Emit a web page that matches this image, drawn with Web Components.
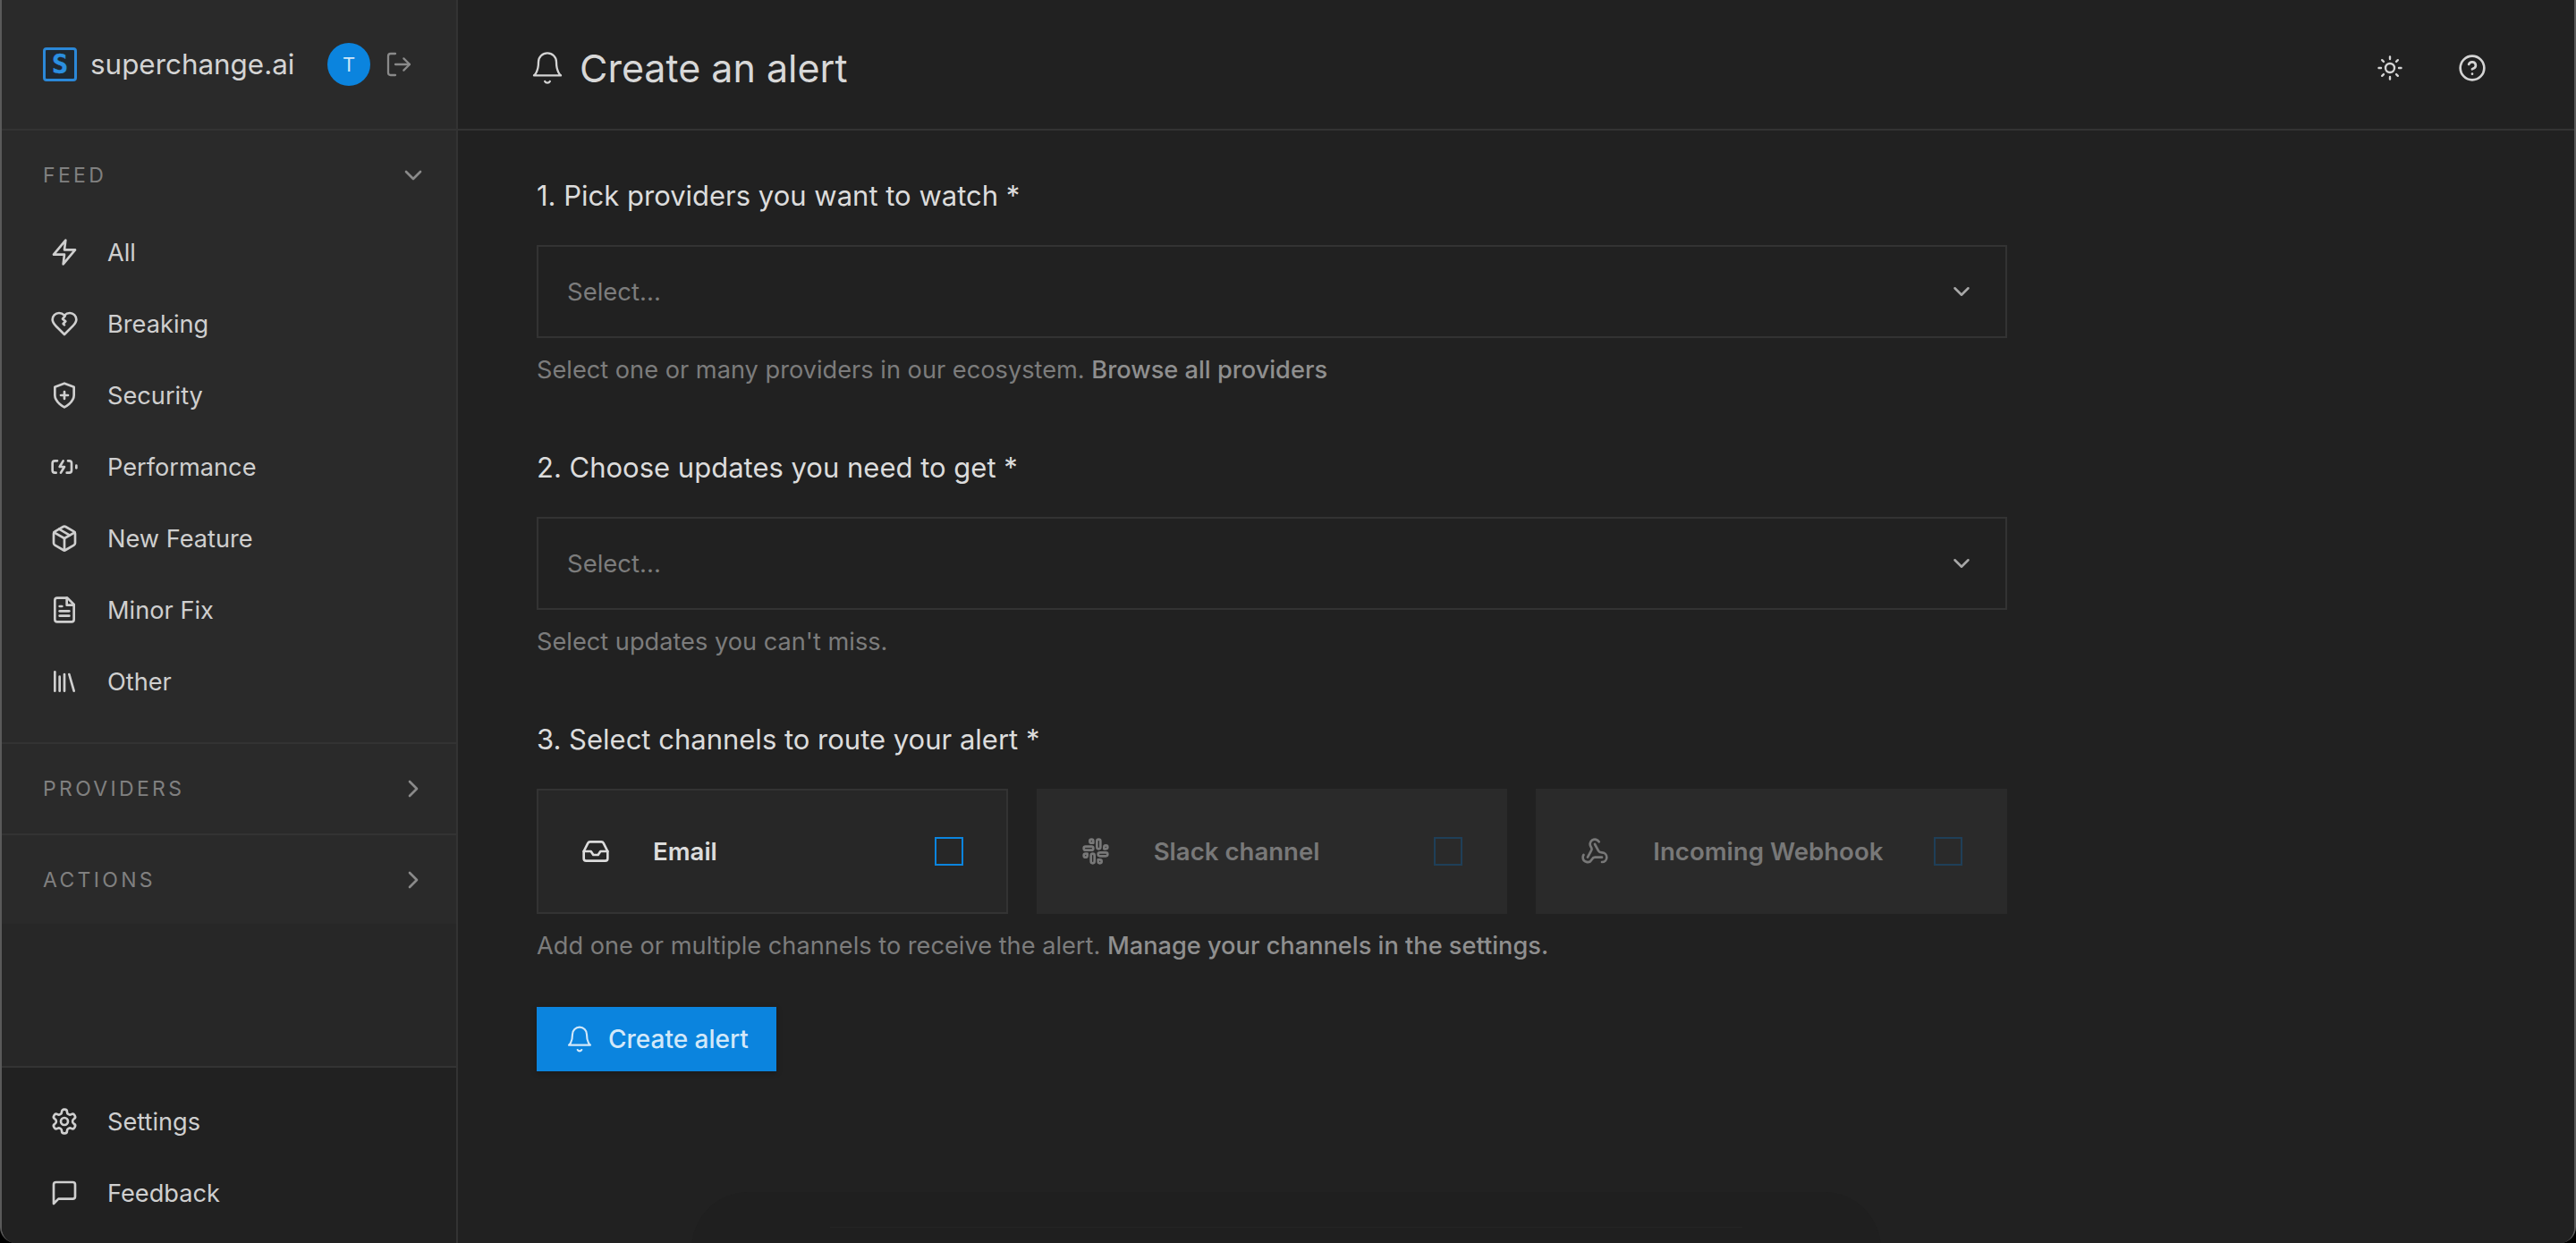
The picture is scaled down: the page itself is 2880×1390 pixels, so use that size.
<!DOCTYPE html>
<html lang="en"><head><meta charset="utf-8"><title>Create an alert</title>
<style>
html,body{margin:0;height:100%;background:#000}
body{font-family:Inter,"Liberation Sans",sans-serif;color:#d4d4d4}
b{font-weight:500;color:#8f8f8f}
</style></head><body>
<sc-app>
  <sc-sidebar slot="side">
    <sc-brand></sc-brand>
    <sc-group>
      <sc-head label="FEED" open></sc-head>
      <sc-item icon="zap">All</sc-item>
      <sc-item icon="heart">Breaking</sc-item>
      <sc-item icon="shield">Security</sc-item>
      <sc-item icon="battery">Performance</sc-item>
      <sc-item icon="package">New Feature</sc-item>
      <sc-item icon="file">Minor Fix</sc-item>
      <sc-item icon="library">Other</sc-item>
    </sc-group>
    <sc-head label="PROVIDERS" h="100"></sc-head>
    <sc-head label="ACTIONS" h="99"></sc-head>
    <sc-foot>
      <sc-item icon="settings">Settings</sc-item>
      <sc-item icon="message">Feedback</sc-item>
    </sc-foot>
  </sc-sidebar>
  <sc-main>
    <sc-topbar>Create an alert</sc-topbar>
    <sc-form>
      <sc-field label="1. Pick providers you want to watch *">
        <sc-select>Select...</sc-select>
        <span slot="hint">Select one or many providers in our ecosystem. <b>Browse all providers</b></span>
      </sc-field>
      <sc-field label="2. Choose updates you need to get *">
        <sc-select>Select...</sc-select>
        <span slot="hint">Select updates you can't miss.</span>
      </sc-field>
      <sc-field label="3. Select channels to route your alert *">
        <sc-channels>
          <sc-channel icon="inbox">Email</sc-channel>
          <sc-channel icon="slack" disabled>Slack channel</sc-channel>
          <sc-channel icon="webhook" disabled>Incoming Webhook</sc-channel>
        </sc-channels>
        <span slot="hint">Add one or multiple channels to receive the alert. <b>Manage your channels in the settings.</b></span>
      </sc-field>
      <sc-button>Create alert</sc-button>
    </sc-form>
    <sc-peek></sc-peek>
  </sc-main>
</sc-app>
<script>
const P={
zap:'<polygon points="13 2 3 14 12 14 11 22 21 10 12 10 13 2"/>',
heart:'<path d="M19 14c1.49-1.46 3-3.21 3-5.5A5.5 5.5 0 0 0 16.5 3c-1.76 0-3 .5-4.5 2-1.5-1.5-2.74-2-4.5-2A5.5 5.5 0 0 0 2 8.5c0 2.3 1.5 4.05 3 5.5l7 7Z"/><path d="m12 13-1-1 2-2-2.5-2 2-2.5"/>',
shield:'<path d="M12 22s8-4 8-10V5l-8-3-8 3v7c0 6 8 10 8 10"/><path d="M9 12h6"/><path d="M12 9v6"/>',
battery:'<path d="M15 7h1a2 2 0 0 1 2 2v6a2 2 0 0 1-2 2h-2"/><path d="M6 7H4a2 2 0 0 0-2 2v6a2 2 0 0 0 2 2h1"/><path d="m11 7-3 5h4l-3 5"/><path d="M22 11v2"/>',
package:'<path d="M16.5 9.4 7.55 4.24"/><path d="M21 16V8a2 2 0 0 0-1-1.73l-7-4a2 2 0 0 0-2 0l-7 4A2 2 0 0 0 3 8v8a2 2 0 0 0 1 1.73l7 4a2 2 0 0 0 2 0l7-4A2 2 0 0 0 21 16z"/><path d="M3.29 7 12 12l8.71-5"/><path d="M12 22V12"/>',
file:'<path d="M14.5 2H6a2 2 0 0 0-2 2v16a2 2 0 0 0 2 2h12a2 2 0 0 0 2-2V7.5L14.5 2z"/><path d="M14 2v6h6"/><path d="M16 13H8"/><path d="M16 17H8"/><path d="M10 9H8"/>',
library:'<path d="m16 6 4 14"/><path d="M12 6v14"/><path d="M8 8v12"/><path d="M4 4v16"/>',
settings:'<path d="M12.22 2h-.44a2 2 0 0 0-2 2v.18a2 2 0 0 1-1 1.73l-.43.25a2 2 0 0 1-2 0l-.15-.08a2 2 0 0 0-2.73.73l-.22.38a2 2 0 0 0 .73 2.73l.15.1a2 2 0 0 1 1 1.72v.51a2 2 0 0 1-1 1.74l-.15.09a2 2 0 0 0-.73 2.73l.22.38a2 2 0 0 0 2.73.73l.15-.08a2 2 0 0 1 2 0l.43.25a2 2 0 0 1 1 1.73V20a2 2 0 0 0 2 2h.44a2 2 0 0 0 2-2v-.18a2 2 0 0 1 1-1.73l.43-.25a2 2 0 0 1 2 0l.15.08a2 2 0 0 0 2.73-.73l.22-.39a2 2 0 0 0-.73-2.73l-.15-.08a2 2 0 0 1-1-1.74v-.5a2 2 0 0 1 1-1.74l.15-.09a2 2 0 0 0 .73-2.73l-.22-.38a2 2 0 0 0-2.73-.73l-.15.08a2 2 0 0 1-2 0l-.43-.25a2 2 0 0 1-1-1.73V4a2 2 0 0 0-2-2z"/><circle cx="12" cy="12" r="3"/>',
message:'<path d="M21 15a2 2 0 0 1-2 2H7l-4 4V5a2 2 0 0 1 2-2h14a2 2 0 0 1 2 2z"/>',
bell:'<path d="M6 8a6 6 0 0 1 12 0c0 7 3 9 3 9H3s3-2 3-9"/><path d="M10.3 21a1.94 1.94 0 0 0 3.4 0"/>',
sun:'<circle cx="12" cy="12" r="4"/><path d="M12 2v2"/><path d="M12 20v2"/><path d="m4.93 4.93 1.41 1.41"/><path d="m17.66 17.66 1.41 1.41"/><path d="M2 12h2"/><path d="M20 12h2"/><path d="m6.34 17.66-1.41 1.41"/><path d="m19.07 4.93-1.41 1.41"/>',
help:'<circle cx="12" cy="12" r="10"/><path d="M9.09 9a3 3 0 0 1 5.83 1c0 2-3 3-3 3"/><path d="M12 17h.01"/>',
logout:'<path d="M9 21H5a2 2 0 0 1-2-2V5a2 2 0 0 1 2-2h4"/><path d="m16 17 5-5-5-5"/><path d="M21 12H9"/>',
down:'<path d="m6 9 6 6 6-6"/>',
right:'<path d="m9 18 6-6-6-6"/>',
inbox:'<path d="M22 12h-6l-2 3h-4l-2-3H2"/><path d="M5.45 5.11 2 12v6a2 2 0 0 0 2 2h16a2 2 0 0 0 2-2v-6l-3.45-6.89A2 2 0 0 0 16.76 4H7.24a2 2 0 0 0-1.79 1.11z"/>',
slack:'<rect x="13" y="2" width="3" height="8" rx="1.5"/><path d="M19 8.5V10h1.5A1.5 1.5 0 1 0 19 8.5"/><rect x="8" y="14" width="3" height="8" rx="1.5"/><path d="M5 15.5V14H3.5A1.5 1.5 0 1 0 5 15.5"/><rect x="14" y="13" width="8" height="3" rx="1.5"/><path d="M15.5 19H14v1.5a1.5 1.5 0 1 0 1.5-1.5"/><rect x="2" y="8" width="8" height="3" rx="1.5"/><path d="M8.5 5H10V3.5A1.5 1.5 0 1 0 8.5 5"/>',
webhook:'<path d="M18 16.98h-5.99c-1.1 0-1.95.94-2.48 1.9A4 4 0 0 1 2 17c.01-.7.2-1.4.57-2"/><path d="m6 17 3.13-5.78c.53-.97.1-2.18-.5-3.1a4 4 0 1 1 6.89-4.06"/><path d="m12 6 3.13 5.73C15.66 12.7 16.9 13 18 13a4 4 0 0 1 0 8"/>'
};
const ico=(n,s=32,w=2)=>`<svg width="${s}" height="${s}" viewBox="0 0 24 24" fill="none" stroke="currentColor" stroke-width="${w}" stroke-linecap="round" stroke-linejoin="round" style="display:block;flex:none">${P[n]}</svg>`;
function def(name,render){customElements.define(name,class extends HTMLElement{
  constructor(){super();this.attachShadow({mode:'open'})}
  connectedCallback(){this.shadowRoot.innerHTML=render(this)}
})}
def('sc-app',()=>`<style>:host{display:flex;box-sizing:border-box;width:2880px;height:1390px;border:solid #5a5a5a;border-width:0 2px;border-radius:0 0 18px 18px;overflow:hidden;background:#212121;position:relative}</style><slot name="side"></slot><slot></slot>`);
def('sc-sidebar',()=>`<style>:host{display:flex;flex-direction:column;flex:none;width:510px;box-sizing:border-box;border-right:2px solid #333;background:#272727}</style><slot></slot>`);
def('sc-brand',()=>`<style>:host{display:flex;align-items:center;box-sizing:border-box;height:146px;flex:none;padding:0 48px 0 46px;border-bottom:2px solid #333;background:#2a2a2a}
.logo{box-sizing:border-box;width:38px;height:38px;border:3px solid #2b88d8;border-radius:4px;background:#1f2830;display:flex;align-items:center;justify-content:center;color:#2b8fe0;font:800 30px/1 "DejaVu Sans Mono",monospace;-webkit-text-stroke:.4px #2b8fe0;flex:none}
.name{margin-left:15px;font-size:31.4px;line-height:40px;color:#d4d4d4;white-space:nowrap}
.av{margin-left:auto;width:48px;height:48px;border-radius:50%;background:#0b84de;color:#cfe6f8;font-size:22px;display:flex;align-items:center;justify-content:center;flex:none}
.out{margin-left:16px;color:#8a8a8a}</style>
<span class="logo">S</span><span class="name">superchange.ai</span><span class="av">T</span><span class="out">${ico('logout',32,1.7)}</span>`);
def('sc-group',()=>`<style>:host{display:block;flex:none;background:#2a2a2a;padding-bottom:28px;border-bottom:2px solid #333}</style><slot></slot>`);
def('sc-head',el=>{const h=el.getAttribute('h')||92;const open=el.hasAttribute('open');
return `<style>:host{display:flex;align-items:center;justify-content:space-between;flex:none;box-sizing:content-box;height:${h}px;padding:${open?4:0}px 32px 0 46px;background:#2a2a2a;${open?'':'border-bottom:2px solid #333;'}}
:host([h="99"]){border-bottom:0}
span{font-size:23px;letter-spacing:.145em;color:#808080;line-height:30px}i{color:#8a8a8a;display:block}</style><span>${el.getAttribute('label')}</span><i>${ico(open?'down':'right')}</i>`});
def('sc-item',el=>`<style>:host{display:flex;align-items:center;height:80px;padding-left:54px;gap:32px;font-size:27.2px;color:#cfcfcf}i{display:block;color:#cfcfcf}</style><i>${ico(el.getAttribute('icon'))}</i><slot></slot>`);
def('sc-foot',()=>`<style>:host{display:block;margin-top:auto;flex:none;border-top:2px solid #333;background:#212121;padding:20px 0 16px}</style><slot></slot>`);
def('sc-main',()=>`<style>:host{display:block;flex:1;min-width:0;position:relative;background:#212121}</style><slot></slot>`);
def('sc-topbar',()=>`<style>:host{display:flex;align-items:center;box-sizing:border-box;height:146px;padding:8px 98px 0 80px;border-bottom:2px solid #333}
i{display:block;color:#d4d4d4}.t{font-size:43px;line-height:60px;margin-left:16px;color:#d8d8d8}.r{margin-left:auto;display:flex;align-items:center;gap:61px;color:#d4d4d4}</style>
<i>${ico('bell',40,1.4)}</i><span class="t"><slot></slot></span><span class="r">${ico('sun',30,1.9)}${ico('help',32,2)}</span>`);
def('sc-form',()=>`<style>:host{display:flex;flex-direction:column;align-items:flex-start;width:1644px;padding:52px 0 0 88px;position:relative;z-index:1}</style><slot></slot>`);
def('sc-field',el=>`<style>:host{display:block;width:1644px;margin-bottom:68px}:host(:nth-of-type(3)){margin-bottom:48px}
.l{font-size:31px;line-height:41px;color:#dcdcdc;margin-bottom:35px}.h{font-size:27.2px;line-height:40px;color:#7c7c7c;margin-top:16px}
::slotted(span){display:block}</style><div class="l">${el.getAttribute('label')}</div><slot></slot><div class="h"><slot name="hint"></slot></div>`);
def('sc-select',()=>`<style>:host{display:flex;align-items:center;justify-content:space-between;box-sizing:border-box;height:104px;padding:0 34px 0 32px;border:2px solid #333;font-size:27.5px;color:#7c7c7c}i{display:block;color:#a8a8a8}</style><slot></slot><i>${ico('down',30)}</i>`);
def('sc-channels',()=>`<style>:host{display:grid;grid-template-columns:repeat(3,1fr);gap:32px}</style><slot></slot>`);
def('sc-channel',el=>{const d=el.hasAttribute('disabled');return `<style>:host{display:flex;align-items:center;box-sizing:border-box;height:140px;padding:0 48px;gap:${d?49:48}px;border:2px solid ${d?'#2a2a2a':'#333'};background:${d?'#2a2a2a':'#272727'};font-size:27.6px;font-weight:600;color:${d?'#787878':'#dcdcdc'}}
i{display:block;color:${d?'#787878':'#dcdcdc'}}b{margin-left:auto;box-sizing:border-box;width:32px;height:32px;border:2px solid ${d?'#1f3f58':'#0b84de'};flex:none}</style><i>${ico(el.getAttribute('icon'))}</i><span><slot></slot></span><b></b>`});
def('sc-button',()=>`<style>:host{display:flex;align-items:center;box-sizing:border-box;width:268px;height:72px;padding-left:32px;gap:16px;background:#0b84de;color:#d2e8f9;font-size:28px;font-weight:500;box-shadow:0 2px 6px rgba(0,0,0,.25)}</style>${ico('bell',32,1.6)}<span><slot></slot></span>`);
def('sc-peek',()=>`<style>:host{position:absolute;left:261px;top:1333px;width:1330px;height:120px;border-radius:64px 64px 0 0;background:#1f1f1f}
div{position:absolute;left:155px;right:155px;top:39px;height:1px;background:#242424}</style><div></div>`);
</script>
</body></html>
